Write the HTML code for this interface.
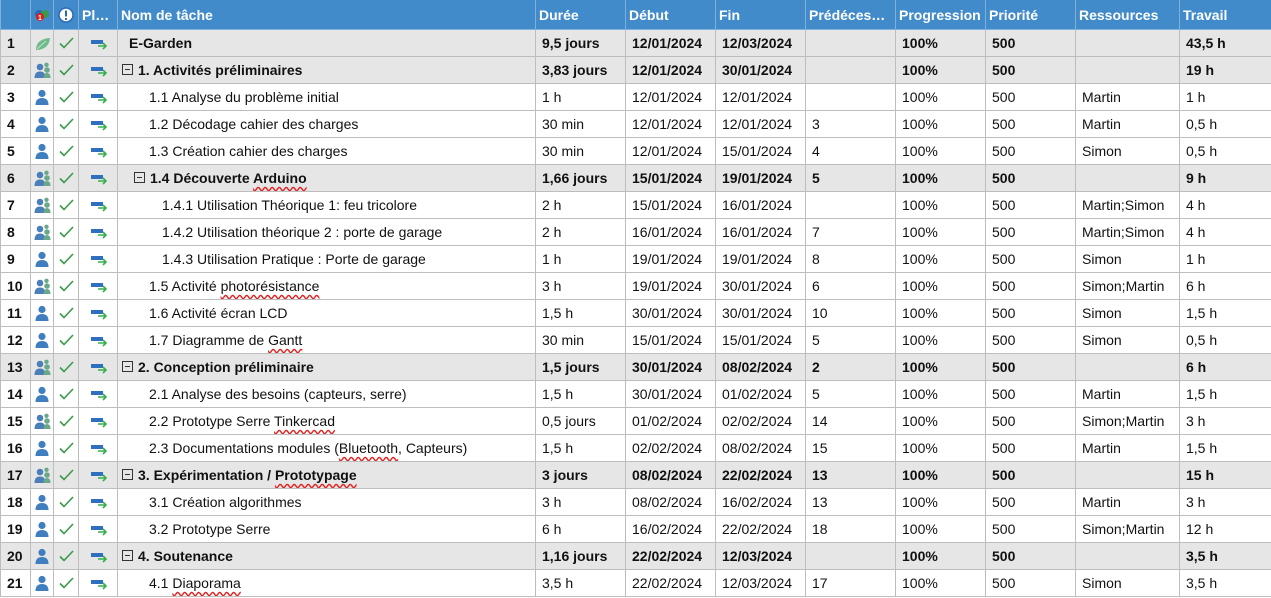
<!DOCTYPE html>
<html><head><meta charset="utf-8"><style>
body{margin:0;background:#fff;font-family:"Liberation Sans",Arial,sans-serif;font-size:14px;color:#111}
table{border-collapse:collapse;table-layout:fixed;width:1271px}
td,th{border:1px solid #bdbdbd;height:26px;padding:0 0 0 6px;white-space:nowrap;overflow:hidden;text-align:left}
th{background:#428bca;color:#fff;font-weight:bold;height:29px;border-color:#7fb0dc;border-top:none;padding-left:3px}
tr.s td{background:#e6e6e6;font-weight:bold}
td.n{padding-left:6px;font-weight:bold}
td.i{padding:0;text-align:center}
.w{text-decoration:underline wavy #e02020;text-decoration-skip-ink:none;text-underline-offset:3px}
.b{display:inline-block;width:9px;height:9px;border:1px solid #333;position:relative;vertical-align:0;margin-right:5px;font-weight:normal}
.b:after{content:"";position:absolute;left:2px;right:2px;top:4px;height:1px;background:#333}
svg{display:block;margin:auto}
</style></head><body>
<svg width="0" height="0" style="position:absolute"><defs>
<g id="p"><circle cx="8" cy="4.5" r="3.6" fill="#3f7fc0"/><path d="M1.5 16 Q1.5 9 8 9 Q14.5 9 14.5 16Z" fill="#3f7fc0"/></g>
<g id="g"><circle cx="6" cy="5" r="3.3" fill="#4a7fba"/><path d="M0.5 16 Q0.5 9.5 6 9.5 Q11.5 9.5 11.5 16Z" fill="#4a7fba"/><circle cx="13" cy="8" r="2.8" fill="#6aa88a"/><path d="M9.5 16 Q9.5 11 13 11 Q16.5 11 16.5 16Z" fill="#6aa88a"/><circle cx="12.5" cy="2.8" r="2.2" fill="#6aa88a"/></g>
<g id="c"><path d="M2 8.5 L6 12.5 L15 3" stroke="#3a9a4a" stroke-width="1.6" fill="none"/></g>
<g id="a"><rect x="1" y="5" width="12" height="4" fill="#2f6fbf"/><path d="M8 11 H16 M13 8 L16 11 L13 14" stroke="#35b04a" stroke-width="1.6" fill="none"/></g>
<g id="l"><path d="M2 15 Q2 4 16 3 Q15 14 3 15Z" fill="#6cbb8a"/><path d="M3 14 L12 6" stroke="#e6e6e6" stroke-width="0.8"/></g>
</defs></svg>
<table>
<colgroup><col style="width:30px"><col style="width:23px"><col style="width:25px"><col style="width:39px"><col style="width:418px"><col style="width:90px"><col style="width:90px"><col style="width:90px"><col style="width:90px"><col style="width:90px"><col style="width:90px"><col style="width:104px"><col style="width:92px"></colgroup>
<tr><th></th><th style="padding:0"><svg width="16" height="14"><circle cx="5" cy="6" r="4" fill="#2a6ab5"/><circle cx="11" cy="6" r="4" fill="#3a9a4a"/><circle cx="6" cy="9" r="4" fill="#d42020"/><text x="4" y="12" font-size="7" fill="#fff" font-family="Liberation Sans">1</text></svg></th><th style="padding:0"><svg width="16" height="16"><circle cx="8" cy="8" r="7" fill="#fff" stroke="#2a6ab5" stroke-width="1.5"/><rect x="7" y="3.5" width="2" height="6" fill="#2a6ab5"/><rect x="7" y="11" width="2" height="2" fill="#2a6ab5"/></svg></th><th>Pl…</th><th>Nom de tâche</th><th>Durée</th><th>Début</th><th>Fin</th><th>Prédéces…</th><th>Progression</th><th>Priorité</th><th>Ressources</th><th>Travail</th></tr>
<tr class="s"><td class="n">1</td><td class="i"><svg width="17" height="17"><use href="#l"/></svg></td><td class="i"><svg width="17" height="17"><use href="#c"/></svg></td><td class="i"><svg width="17" height="16"><use href="#a"/></svg></td><td style="padding-left:11px">E-Garden</td><td>9,5 jours</td><td>12/01/2024</td><td>12/03/2024</td><td></td><td>100%</td><td>500</td><td></td><td>43,5 h</td></tr>
<tr class="s"><td class="n">2</td><td class="i"><svg width="17" height="17"><use href="#g"/></svg></td><td class="i"><svg width="17" height="17"><use href="#c"/></svg></td><td class="i"><svg width="17" height="16"><use href="#a"/></svg></td><td style="padding-left:4px"><span class="b"></span>1. Activités préliminaires</td><td>3,83 jours</td><td>12/01/2024</td><td>30/01/2024</td><td></td><td>100%</td><td>500</td><td></td><td>19 h</td></tr>
<tr><td class="n">3</td><td class="i"><svg width="17" height="17"><use href="#p"/></svg></td><td class="i"><svg width="17" height="17"><use href="#c"/></svg></td><td class="i"><svg width="17" height="16"><use href="#a"/></svg></td><td style="padding-left:31px">1.1 Analyse du problème initial</td><td>1 h</td><td>12/01/2024</td><td>12/01/2024</td><td></td><td>100%</td><td>500</td><td>Martin</td><td>1 h</td></tr>
<tr><td class="n">4</td><td class="i"><svg width="17" height="17"><use href="#p"/></svg></td><td class="i"><svg width="17" height="17"><use href="#c"/></svg></td><td class="i"><svg width="17" height="16"><use href="#a"/></svg></td><td style="padding-left:31px">1.2 Décodage cahier des charges</td><td>30 min</td><td>12/01/2024</td><td>12/01/2024</td><td>3</td><td>100%</td><td>500</td><td>Martin</td><td>0,5 h</td></tr>
<tr><td class="n">5</td><td class="i"><svg width="17" height="17"><use href="#p"/></svg></td><td class="i"><svg width="17" height="17"><use href="#c"/></svg></td><td class="i"><svg width="17" height="16"><use href="#a"/></svg></td><td style="padding-left:31px">1.3 Création cahier des charges</td><td>30 min</td><td>12/01/2024</td><td>15/01/2024</td><td>4</td><td>100%</td><td>500</td><td>Simon</td><td>0,5 h</td></tr>
<tr class="s"><td class="n">6</td><td class="i"><svg width="17" height="17"><use href="#g"/></svg></td><td class="i"><svg width="17" height="17"><use href="#c"/></svg></td><td class="i"><svg width="17" height="16"><use href="#a"/></svg></td><td style="padding-left:16px"><span class="b"></span>1.4 Découverte <span class="w">Arduino</span></td><td>1,66 jours</td><td>15/01/2024</td><td>19/01/2024</td><td>5</td><td>100%</td><td>500</td><td></td><td>9 h</td></tr>
<tr><td class="n">7</td><td class="i"><svg width="17" height="17"><use href="#g"/></svg></td><td class="i"><svg width="17" height="17"><use href="#c"/></svg></td><td class="i"><svg width="17" height="16"><use href="#a"/></svg></td><td style="padding-left:44px">1.4.1 Utilisation Théorique 1: feu tricolore</td><td>2 h</td><td>15/01/2024</td><td>16/01/2024</td><td></td><td>100%</td><td>500</td><td>Martin;Simon</td><td>4 h</td></tr>
<tr><td class="n">8</td><td class="i"><svg width="17" height="17"><use href="#g"/></svg></td><td class="i"><svg width="17" height="17"><use href="#c"/></svg></td><td class="i"><svg width="17" height="16"><use href="#a"/></svg></td><td style="padding-left:44px">1.4.2 Utilisation théorique 2 : porte de garage</td><td>2 h</td><td>16/01/2024</td><td>16/01/2024</td><td>7</td><td>100%</td><td>500</td><td>Martin;Simon</td><td>4 h</td></tr>
<tr><td class="n">9</td><td class="i"><svg width="17" height="17"><use href="#p"/></svg></td><td class="i"><svg width="17" height="17"><use href="#c"/></svg></td><td class="i"><svg width="17" height="16"><use href="#a"/></svg></td><td style="padding-left:44px">1.4.3 Utilisation Pratique : Porte de garage</td><td>1 h</td><td>19/01/2024</td><td>19/01/2024</td><td>8</td><td>100%</td><td>500</td><td>Simon</td><td>1 h</td></tr>
<tr><td class="n">10</td><td class="i"><svg width="17" height="17"><use href="#g"/></svg></td><td class="i"><svg width="17" height="17"><use href="#c"/></svg></td><td class="i"><svg width="17" height="16"><use href="#a"/></svg></td><td style="padding-left:31px">1.5 Activité <span class="w">photorésistance</span></td><td>3 h</td><td>19/01/2024</td><td>30/01/2024</td><td>6</td><td>100%</td><td>500</td><td>Simon;Martin</td><td>6 h</td></tr>
<tr><td class="n">11</td><td class="i"><svg width="17" height="17"><use href="#p"/></svg></td><td class="i"><svg width="17" height="17"><use href="#c"/></svg></td><td class="i"><svg width="17" height="16"><use href="#a"/></svg></td><td style="padding-left:31px">1.6 Activité écran LCD</td><td>1,5 h</td><td>30/01/2024</td><td>30/01/2024</td><td>10</td><td>100%</td><td>500</td><td>Simon</td><td>1,5 h</td></tr>
<tr><td class="n">12</td><td class="i"><svg width="17" height="17"><use href="#p"/></svg></td><td class="i"><svg width="17" height="17"><use href="#c"/></svg></td><td class="i"><svg width="17" height="16"><use href="#a"/></svg></td><td style="padding-left:31px">1.7 Diagramme de <span class="w">Gantt</span></td><td>30 min</td><td>15/01/2024</td><td>15/01/2024</td><td>5</td><td>100%</td><td>500</td><td>Simon</td><td>0,5 h</td></tr>
<tr class="s"><td class="n">13</td><td class="i"><svg width="17" height="17"><use href="#g"/></svg></td><td class="i"><svg width="17" height="17"><use href="#c"/></svg></td><td class="i"><svg width="17" height="16"><use href="#a"/></svg></td><td style="padding-left:4px"><span class="b"></span>2. Conception préliminaire</td><td>1,5 jours</td><td>30/01/2024</td><td>08/02/2024</td><td>2</td><td>100%</td><td>500</td><td></td><td>6 h</td></tr>
<tr><td class="n">14</td><td class="i"><svg width="17" height="17"><use href="#p"/></svg></td><td class="i"><svg width="17" height="17"><use href="#c"/></svg></td><td class="i"><svg width="17" height="16"><use href="#a"/></svg></td><td style="padding-left:31px">2.1 Analyse des besoins (capteurs, serre)</td><td>1,5 h</td><td>30/01/2024</td><td>01/02/2024</td><td>5</td><td>100%</td><td>500</td><td>Martin</td><td>1,5 h</td></tr>
<tr><td class="n">15</td><td class="i"><svg width="17" height="17"><use href="#g"/></svg></td><td class="i"><svg width="17" height="17"><use href="#c"/></svg></td><td class="i"><svg width="17" height="16"><use href="#a"/></svg></td><td style="padding-left:31px">2.2 Prototype Serre <span class="w">Tinkercad</span></td><td>0,5 jours</td><td>01/02/2024</td><td>02/02/2024</td><td>14</td><td>100%</td><td>500</td><td>Simon;Martin</td><td>3 h</td></tr>
<tr><td class="n">16</td><td class="i"><svg width="17" height="17"><use href="#p"/></svg></td><td class="i"><svg width="17" height="17"><use href="#c"/></svg></td><td class="i"><svg width="17" height="16"><use href="#a"/></svg></td><td style="padding-left:31px">2.3 Documentations modules (<span class="w">Bluetooth</span>, Capteurs)</td><td>1,5 h</td><td>02/02/2024</td><td>08/02/2024</td><td>15</td><td>100%</td><td>500</td><td>Martin</td><td>1,5 h</td></tr>
<tr class="s"><td class="n">17</td><td class="i"><svg width="17" height="17"><use href="#g"/></svg></td><td class="i"><svg width="17" height="17"><use href="#c"/></svg></td><td class="i"><svg width="17" height="16"><use href="#a"/></svg></td><td style="padding-left:4px"><span class="b"></span>3. Expérimentation / <span class="w">Prototypage</span></td><td>3 jours</td><td>08/02/2024</td><td>22/02/2024</td><td>13</td><td>100%</td><td>500</td><td></td><td>15 h</td></tr>
<tr><td class="n">18</td><td class="i"><svg width="17" height="17"><use href="#p"/></svg></td><td class="i"><svg width="17" height="17"><use href="#c"/></svg></td><td class="i"><svg width="17" height="16"><use href="#a"/></svg></td><td style="padding-left:31px">3.1 Création algorithmes</td><td>3 h</td><td>08/02/2024</td><td>16/02/2024</td><td>13</td><td>100%</td><td>500</td><td>Martin</td><td>3 h</td></tr>
<tr><td class="n">19</td><td class="i"><svg width="17" height="17"><use href="#p"/></svg></td><td class="i"><svg width="17" height="17"><use href="#c"/></svg></td><td class="i"><svg width="17" height="16"><use href="#a"/></svg></td><td style="padding-left:31px">3.2 Prototype Serre</td><td>6 h</td><td>16/02/2024</td><td>22/02/2024</td><td>18</td><td>100%</td><td>500</td><td>Simon;Martin</td><td>12 h</td></tr>
<tr class="s"><td class="n">20</td><td class="i"><svg width="17" height="17"><use href="#p"/></svg></td><td class="i"><svg width="17" height="17"><use href="#c"/></svg></td><td class="i"><svg width="17" height="16"><use href="#a"/></svg></td><td style="padding-left:4px"><span class="b"></span>4. Soutenance</td><td>1,16 jours</td><td>22/02/2024</td><td>12/03/2024</td><td></td><td>100%</td><td>500</td><td></td><td>3,5 h</td></tr>
<tr><td class="n">21</td><td class="i"><svg width="17" height="17"><use href="#p"/></svg></td><td class="i"><svg width="17" height="17"><use href="#c"/></svg></td><td class="i"><svg width="17" height="16"><use href="#a"/></svg></td><td style="padding-left:31px">4.1 <span class="w">Diaporama</span></td><td>3,5 h</td><td>22/02/2024</td><td>12/03/2024</td><td>17</td><td>100%</td><td>500</td><td>Simon</td><td>3,5 h</td></tr>
</table>
</body></html>
